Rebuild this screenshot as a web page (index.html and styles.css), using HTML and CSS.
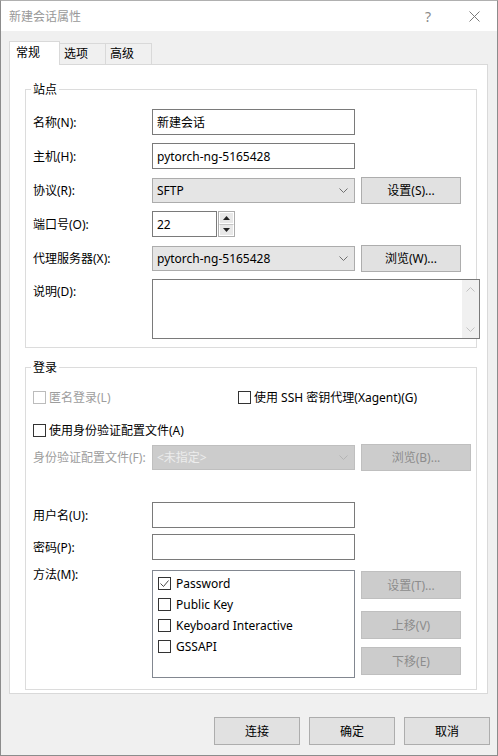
FILE: index.html
```html
<!DOCTYPE html>
<html lang="zh-CN">
<head>
	<meta charset="UTF-8">
	<title>新建会话属性</title>
	<link rel="stylesheet" href="styles.css">
</head>
<body>
<div class="window">
	<div class="titlebar">
		<span class="title">新建会话属性</span>
		<span class="cap-btn help">?</span>
		<span class="cap-btn">
			<svg width="11" height="11" viewBox="0 0 11 11"><path d="M0.5 0.5 L10.5 10.5 M10.5 0.5 L0.5 10.5" stroke="#7a7a7a" stroke-width="1"/></svg>
		</span>
	</div>

	<div class="content">
		<div class="tabs">
			<div class="tab active">常规</div>
			<div class="tab">选项</div>
			<div class="tab">高级</div>
		</div>

		<div class="panel">
			<!-- 站点 -->
			<fieldset class="group site">
				<legend>站点</legend>
				<div class="row">
					<label>名称(N):</label>
					<input class="field" type="text" value="新建会话">
				</div>
				<div class="row">
					<label>主机(H):</label>
					<input class="field" type="text" value="pytorch-ng-5165428">
				</div>
				<div class="row">
					<label>协议(R):</label>
					<div class="select"><span>SFTP</span><svg class="chev" width="9" height="5" viewBox="0 0 9 5"><path d="M0.5 0.5 L4.5 4.5 L8.5 0.5" fill="none" stroke="#707070"/></svg></div>
					<button class="btn">设置(S)...</button>
				</div>
				<div class="row">
					<label>端口号(O):</label>
					<input class="field port" type="text" value="22">
					<div class="spin">
						<div class="spin-btn"><svg width="7" height="4" viewBox="0 0 7 4"><path d="M3.5 0 L7 4 L0 4 Z" fill="#222"/></svg></div>
						<div class="spin-btn"><svg width="7" height="4" viewBox="0 0 7 4"><path d="M0 0 L7 0 L3.5 4 Z" fill="#222"/></svg></div>
					</div>
				</div>
				<div class="row">
					<label>代理服务器(X):</label>
					<div class="select"><span>pytorch-ng-5165428</span><svg class="chev" width="9" height="5" viewBox="0 0 9 5"><path d="M0.5 0.5 L4.5 4.5 L8.5 0.5" fill="none" stroke="#707070"/></svg></div>
					<button class="btn">浏览(W)...</button>
				</div>
				<div class="row memo-row">
					<label>说明(D):</label>
					<div class="memo">
						<div class="memo-text"></div>
						<div class="vscroll">
							<svg width="9" height="5" viewBox="0 0 9 5"><path d="M0.5 4.5 L4.5 0.5 L8.5 4.5" fill="none" stroke="#c2c2c2"/></svg>
							<svg width="9" height="5" viewBox="0 0 9 5"><path d="M0.5 0.5 L4.5 4.5 L8.5 0.5" fill="none" stroke="#c2c2c2"/></svg>
						</div>
					</div>
				</div>
			</fieldset>

			<!-- 登录 -->
			<fieldset class="group login">
				<legend>登录</legend>
				<div class="check-row">
					<div class="check disabled first-col"><span class="box"></span>匿名登录(L)</div>
					<div class="check"><span class="box"></span>使用 SSH 密钥代理(Xagent)(G)</div>
				</div>
				<div class="check-row second">
					<div class="check"><span class="box"></span>使用身份验证配置文件(A)</div>
				</div>
				<div class="row profile-row">
					<label class="disabled">身份验证配置文件(F):</label>
					<div class="select off"><span>&lt;未指定&gt;</span><svg class="chev" width="9" height="5" viewBox="0 0 9 5"><path d="M0.5 0.5 L4.5 4.5 L8.5 0.5" fill="none" stroke="#b4b4b4"/></svg></div>
					<button class="btn off long">浏览(B)...</button>
				</div>
				<div class="row user-row">
					<label>用户名(U):</label>
					<input class="field" type="text" value="">
				</div>
				<div class="row pass-row">
					<label>密码(P):</label>
					<input class="field" type="password" value="">
				</div>
				<div class="method-row">
					<label>方法(M):</label>
					<div class="methods">
						<div class="check"><span class="box"><svg width="11" height="11" viewBox="0 0 11 11"><path d="M1.5 5.5 L4.5 8.5 L9.5 2.5" fill="none" stroke="#4a4a4a" stroke-width="1"/></svg></span>Password</div>
						<div class="check"><span class="box"></span>Public Key</div>
						<div class="check"><span class="box"></span>Keyboard Interactive</div>
						<div class="check"><span class="box"></span>GSSAPI</div>
					</div>
					<div class="side">
						<button class="btn off">设置(T)...</button>
						<button class="btn off up">上移(V)</button>
						<button class="btn off down">下移(E)</button>
					</div>
				</div>
			</fieldset>
		</div>

		<div class="actions">
			<button class="btn act">连接</button>
			<button class="btn act">确定</button>
			<button class="btn act">取消</button>
		</div>
	</div>
</div>
</body>
</html>
```

FILE: styles.css
```css
* {
	box-sizing: border-box;
}

body {
	margin: 0;
	background-color: #f0f0f0;
	font-family: "Noto Sans", "Noto Sans CJK SC", sans-serif;
	font-size: 12px;
	color: #000;
}

.window {
	width: 498px;
	height: 756px;
	border: 1px solid #8c8c8c;
	border-top-color: #b0b0b0;
	background-color: #f0f0f0;
}

/* 标题栏 */
.titlebar {
	height: 30px;
	background-color: #fff;
	display: flex;
	align-items: center;
	padding-left: 8px;
}
.title {
	flex: 1;
	color: #999;
}
.cap-btn {
	width: 46px;
	height: 30px;
	display: flex;
	align-items: center;
	justify-content: center;
}
.help {
	color: #8a8a8a;
	font-size: 14px;
}

.content {
	padding: 10px 0 0 8px;
}

/* 选项卡 */
.tabs {
	display: flex;
	align-items: flex-end;
	height: 24px;
	margin-bottom: -1px;
	position: relative;
	z-index: 1;
}
.tab {
	width: 46px;
	height: 21px;
	margin-bottom: 1px;
	padding-left: 4px;
	line-height: 20px;
	border: 1px solid #d9d9d9;
	border-left: none;
	border-bottom: none;
	background-color: #f0f0f0;
}
.tab.active {
	width: 51px;
	height: 24px;
	margin-bottom: 0;
	padding-left: 6px;
	line-height: 21px;
	border-left: 1px solid #d9d9d9;
	background-color: #fff;
}

.panel {
	width: 479px;
	border: 1px solid #d9d9d9;
	background-color: #fff;
	padding: 0 0 3px 15px;
}

/* 分组框 */
.group {
	width: 452px;
	min-width: 0;
	margin: 16px 0 0 0;
	border: 1px solid #dcdcdc;
	padding: 11px 0 8px 7px;
}
.group legend {
	padding: 0 2px;
	margin-left: -2px;
	line-height: 17px;
}
.login {
	margin-top: 11px;
	padding-bottom: 11px;
}

.row {
	display: flex;
	align-items: center;
	height: 26px;
	margin-bottom: 8px;
}
.row label {
	width: 119px;
	flex: none;
}
.disabled {
	color: #9d9d9d;
}

.field {
	width: 203px;
	height: 26px;
	border: 1px solid #7a7a7a;
	padding: 0 4px;
	font: inherit;
	color: #000;
	background-color: #fff;
	outline: none;
}
.field.port {
	width: 65px;
}

.spin {
	width: 17px;
	height: 26px;
	margin-left: 1px;
	border: 1px solid #acacac;
	display: flex;
	flex-direction: column;
}
.spin-btn {
	flex: 1;
	display: flex;
	align-items: center;
	justify-content: center;
	background-color: #e8e8e8;
	border: 1px solid #fff;
}
.spin-btn + .spin-btn {
	border-top: 1px solid #c5c5c5;
}

.select {
	width: 203px;
	height: 25px;
	border: 1px solid #acacac;
	background-color: #e5e5e5;
	display: flex;
	align-items: center;
	justify-content: space-between;
	padding: 0 6px 0 4px;
}
.select.off {
	background-color: #cccccc;
	border-color: #bfbfbf;
	color: #ededed;
}

.btn {
	width: 100px;
	height: 27px;
	margin-left: 6px;
	border: 1px solid #adadad;
	background-color: #e1e1e1;
	font: inherit;
	color: #000;
	padding: 0;
}
.btn.off {
	background-color: #cccccc;
	border-color: #bfbfbf;
	color: #8d8d8d;
}
.btn.long {
	width: 110px;
}

/* 说明 */
.memo-row {
	align-items: flex-start;
	height: 60px;
	margin-bottom: 0;
}
.memo-row label {
	line-height: 26px;
}
.memo {
	width: 328px;
	height: 60px;
	flex: none;
	border: 1px solid #7a7a7a;
	background-color: #fff;
	display: flex;
	justify-content: space-between;
}
.vscroll {
	width: 17px;
	background-color: #f0f0f0;
	display: flex;
	flex-direction: column;
	align-items: center;
	justify-content: space-between;
	padding: 7px 0 6px;
}

/* 登录 */
.check-row {
	display: flex;
	align-items: center;
	height: 20px;
}
.check-row.second {
	margin-top: 13px;
}
.check {
	display: flex;
	align-items: center;
	gap: 3px;
}
.first-col {
	width: 205px;
}
.box {
	width: 13px;
	height: 13px;
	border: 1px solid #333;
	background-color: #fff;
	display: flex;
	flex: none;
}
.disabled .box {
	border-color: #bcbcbc;
}

.profile-row {
	margin-top: 4px;
	margin-bottom: 0;
}
.user-row {
	margin-top: 32px;
	margin-bottom: 6px;
}
.pass-row {
	margin-bottom: 10px;
}

.method-row {
	display: flex;
	align-items: flex-start;
}
.method-row label {
	width: 119px;
	line-height: 10px;
}
.methods {
	width: 203px;
	height: 108px;
	border: 1px solid #828790;
	padding: 6px 0 0 5px;
	display: flex;
	flex-direction: column;
	gap: 8px;
}
.methods .check {
	height: 13px;
	gap: 5px;
}
.side {
	display: flex;
	flex-direction: column;
	padding-top: 1px;
}
.side .btn {
	height: 28px;
}
.side .up {
	margin-top: 12px;
}
.side .down {
	margin-top: 8px;
}

/* 底部按钮 */
.actions {
	display: flex;
	justify-content: flex-end;
	gap: 9px;
	margin-top: 23px;
	padding-right: 7px;
}
.btn.act {
	width: 86px;
	height: 28px;
	margin-left: 0;
}
```
